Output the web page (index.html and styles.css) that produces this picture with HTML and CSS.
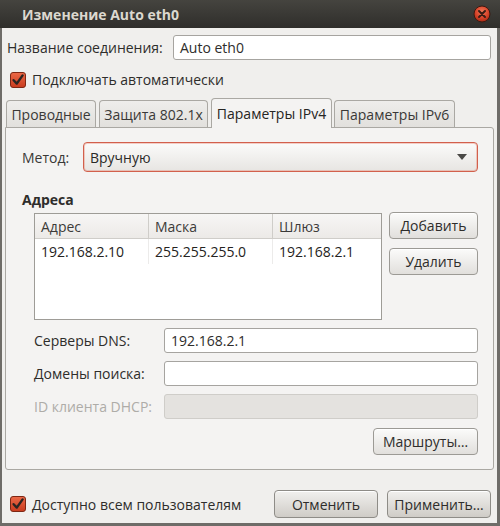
FILE: index.html
```html
<!DOCTYPE html>
<html lang="ru">
<head>
<meta charset="utf-8">
<title>Изменение Auto eth0</title>
<link rel="stylesheet" href="styles.css">
</head>
<body>
<div class="window">
  <div class="titlebar">
    <span class="title">Изменение Auto eth0</span>
    <span class="close">
      <svg width="18" height="18" viewBox="0 0 18 18">
        <defs>
          <radialGradient id="cg" cx="50%" cy="35%" r="65%">
            <stop offset="0" stop-color="#f07a5a"/>
            <stop offset="0.6" stop-color="#d8442a"/>
            <stop offset="1" stop-color="#a82a14"/>
          </radialGradient>
        </defs>
        <circle cx="9" cy="9" r="8" fill="url(#cg)" stroke="#3a1a12" stroke-width="1"/>
        <path d="M6 6 L12 12 M12 6 L6 12" stroke="#3b1c14" stroke-width="2" stroke-linecap="round"/>
      </svg>
    </span>
  </div>
  <div class="body">
    <div class="name-row">
      <span class="name-label">Название соединения:</span>
      <div class="entry name-entry">Auto eth0</div>
    </div>
    <div class="check-row auto-row">
      <svg class="check" width="16" height="16" viewBox="0 0 16 16">
        <defs>
          <linearGradient id="kg" x1="0" y1="0" x2="0" y2="1">
            <stop offset="0" stop-color="#ec6a48"/>
            <stop offset="1" stop-color="#c93b1e"/>
          </linearGradient>
        </defs>
        <rect x="0.5" y="0.5" width="15" height="15" rx="2.5" fill="url(#kg)" stroke="#7d2714"/>
        <path d="M3.6 8.2 L6.8 11.6 L12.6 3.4" fill="none" stroke="#2b2522" stroke-width="2.4" stroke-linecap="round" stroke-linejoin="round"/>
      </svg>
      <span>Подключать автоматически</span>
    </div>
    <div class="tabs">
      <div class="tab t1">Проводные</div>
      <div class="tab t2">Защита 802.1x</div>
      <div class="tab t3 active">Параметры IPv4</div>
      <div class="tab t4">Параметры IPv6</div>
    </div>
    <div class="panel">
      <div class="method-row">
        <span class="method-label">Метод:</span>
        <div class="combo">
          <span>Вручную</span>
          <span class="arrow"></span>
        </div>
      </div>
      <div class="section-title">Адреса</div>
      <div class="addr">
        <div class="table">
          <div class="thead">
            <div class="cell c1">Адрес</div>
            <div class="cell c2">Маска</div>
            <div class="cell c3">Шлюз</div>
          </div>
          <div class="trow">
            <div class="cell c1">192.168.2.10</div>
            <div class="cell c2">255.255.255.0</div>
            <div class="cell c3">192.168.2.1</div>
          </div>
        </div>
        <div class="addr-buttons">
          <div class="btn">Добавить</div>
          <div class="btn">Удалить</div>
        </div>
      </div>
      <div class="form">
        <div class="form-row">
          <span class="form-label">Серверы DNS:</span>
          <div class="entry form-entry">192.168.2.1</div>
        </div>
        <div class="form-row">
          <span class="form-label">Домены поиска:</span>
          <div class="entry form-entry"></div>
        </div>
        <div class="form-row disabled">
          <span class="form-label">ID клиента DHCP:</span>
          <div class="entry form-entry off"></div>
        </div>
      </div>
      <div class="routes-row">
        <div class="btn routes">Маршруты…</div>
      </div>
    </div>
    <div class="footer">
      <div class="check-row">
        <svg class="check" width="16" height="16" viewBox="0 0 16 16">
          <rect x="0.5" y="0.5" width="15" height="15" rx="2.5" fill="url(#kg)" stroke="#7d2714"/>
          <path d="M3.6 8.2 L6.8 11.6 L12.6 3.4" fill="none" stroke="#2b2522" stroke-width="2.4" stroke-linecap="round" stroke-linejoin="round"/>
        </svg>
        <span>Доступно всем пользователям</span>
      </div>
      <div class="footer-buttons">
        <div class="btn big">Отменить</div>
        <div class="btn big">Применить…</div>
      </div>
    </div>
  </div>
</div>
</body>
</html>
```

FILE: styles.css
```css
* { box-sizing: border-box; }
html, body { margin: 0; padding: 0; }
body {
  font-family: "Open Sans", "DejaVu Sans", sans-serif;
  font-size: 14px;
  color: #3a3937;
  background: #d8d6d2;
}
.window {
  width: 500px;
  height: 526px;
  display: flex;
  flex-direction: column;
  background: #f0efed;
  border-style: solid;
  border-color: #6e6c68;
  border-width: 0 3px 3px 2px;
}
.titlebar {
  height: 28px;
  flex: none;
  display: flex;
  align-items: center;
  justify-content: space-between;
  padding: 0 9px 0 22px;
  background: linear-gradient(#45443f, #2f2e2b);
  margin: 0 -3px 0 -2px;
}
.title {
  color: #dcd8cf;
  font-weight: bold;
  font-size: 14px;
}
.close { display: flex; }
.body {
  flex: 1;
  display: flex;
  flex-direction: column;
  padding: 0 3px;
}
.name-row {
  display: flex;
  align-items: center;
  margin-top: 7px;
  padding: 0 3px 0 2px;
}
.name-label {
  width: 166px;
  flex: none;
  color: #2e2d2b;
}
.entry {
  height: 25px;
  background: #fff;
  border: 1px solid #a6a4a0;
  border-radius: 3px;
  padding: 0 6px;
  display: flex;
  align-items: center;
  color: #2e2d2b;
}
.name-entry { flex: 1; }
.check-row {
  display: flex;
  align-items: center;
  gap: 6px;
  color: #2e2d2b;
}
.auto-row {
  margin-top: 10px;
  padding-left: 5px;
}
.check { flex: none; }
.tabs {
  display: flex;
  align-items: flex-end;
  height: 29px;
  margin-top: 9px;
  padding-left: 1px;
  gap: 3px;
  position: relative;
  z-index: 1;
}
.tab {
  height: 27px;
  border: 1px solid #aaa8a3;
  border-bottom: none;
  border-radius: 4px 4px 0 0;
  background: linear-gradient(#eeedeb, #e2e0dd);
  display: flex;
  align-items: center;
  justify-content: center;
  color: #3a3937;
}
.t1 { width: 90px; }
.t2 { width: 109px; }
.t3 { width: 121px; margin-left: 0; }
.t4 { width: 121px; margin-left: -1px; }
.tab.active {
  height: 30px;
  background: #f4f3f2;
  margin-bottom: -1px;
  color: #262523;
  padding-bottom: 1px;
}
.panel {
  height: 343px;
  border: 1px solid #aaa8a3;
  border-radius: 0 3px 3px 3px;
  background: #f4f3f2;
  padding: 14px 15px 0 16px;
  display: flex;
  flex-direction: column;
}
.method-row {
  display: flex;
  align-items: center;
}
.method-label {
  width: 61px;
  flex: none;
}
.combo {
  flex: 1;
  height: 30px;
  border: 1px solid #d2604c;
  border-radius: 4px;
  box-shadow: inset 0 0 0 1px rgba(230, 120, 100, 0.35);
  background: linear-gradient(#fbfbfa, #e7e5e2);
  display: flex;
  align-items: center;
  justify-content: space-between;
  padding: 0 10px 0 6px;
  color: #2a2927;
}
.arrow {
  width: 0;
  height: 0;
  border-left: 5px solid transparent;
  border-right: 5px solid transparent;
  border-top: 6px solid #4a4946;
}
.section-title {
  font-weight: bold;
  margin-top: 20px;
  height: 16px;
  line-height: 16px;
  color: #2e2d2b;
}
.addr {
  display: flex;
  gap: 7px;
  margin-top: 4px;
  padding-left: 12px;
  align-items: flex-start;
}
.table {
  width: 348px;
  height: 107px;
  border: 1px solid #9e9c97;
  background: #fff;
  margin-top: 1px;
}
.thead, .trow { display: flex; }
.thead {
  height: 25px;
  border-bottom: 1px solid #cfcdc9;
  background: linear-gradient(#f7f6f5, #eceae7);
  color: #3c3b39;
}
.trow {
  height: 25px;
  color: #242321;
}
.cell {
  display: flex;
  align-items: center;
  padding-left: 6px;
}
.c1 { width: 114px; border-right: 1px solid #cfcdc9; }
.c2 { width: 124px; border-right: 1px solid #cfcdc9; }
.c3 { flex: 1; }
.trow .c1, .trow .c2 { border-right-color: #ecebea; }
.addr-buttons {
  display: flex;
  flex-direction: column;
  gap: 9px;
}
.btn {
  height: 27px;
  border: 1px solid #9c9a95;
  border-radius: 4px;
  background: linear-gradient(#fbfbfa, #e1dfdc);
  display: flex;
  align-items: center;
  justify-content: center;
  color: #2e2d2b;
  box-shadow: inset 0 1px 0 #fff;
}
.addr-buttons .btn { width: 89px; }
.form {
  display: flex;
  flex-direction: column;
  gap: 8px;
  margin-top: 8px;
  padding-left: 12px;
}
.form-row {
  display: flex;
  align-items: center;
}
.form-label {
  width: 130px;
  flex: none;
  color: #2e2d2b;
}
.form-entry { flex: 1; }
.disabled .form-label { color: #aeaca8; }
.entry.off {
  background: #e4e2df;
  border-color: #cfcdc9;
}
.routes-row {
  display: flex;
  justify-content: flex-end;
  margin-top: 9px;
}
.routes { width: 105px; height: 27px; }
.footer {
  display: flex;
  align-items: center;
  justify-content: space-between;
  margin-top: 20px;
  padding: 0 3px 0 5px;
}
.footer-buttons {
  display: flex;
  gap: 9px;
}
.btn.big {
  width: 104px;
  height: 28px;
  background: linear-gradient(#f1f0ee, #cfccc7);
  border-color: #8e8c87;
}
```
